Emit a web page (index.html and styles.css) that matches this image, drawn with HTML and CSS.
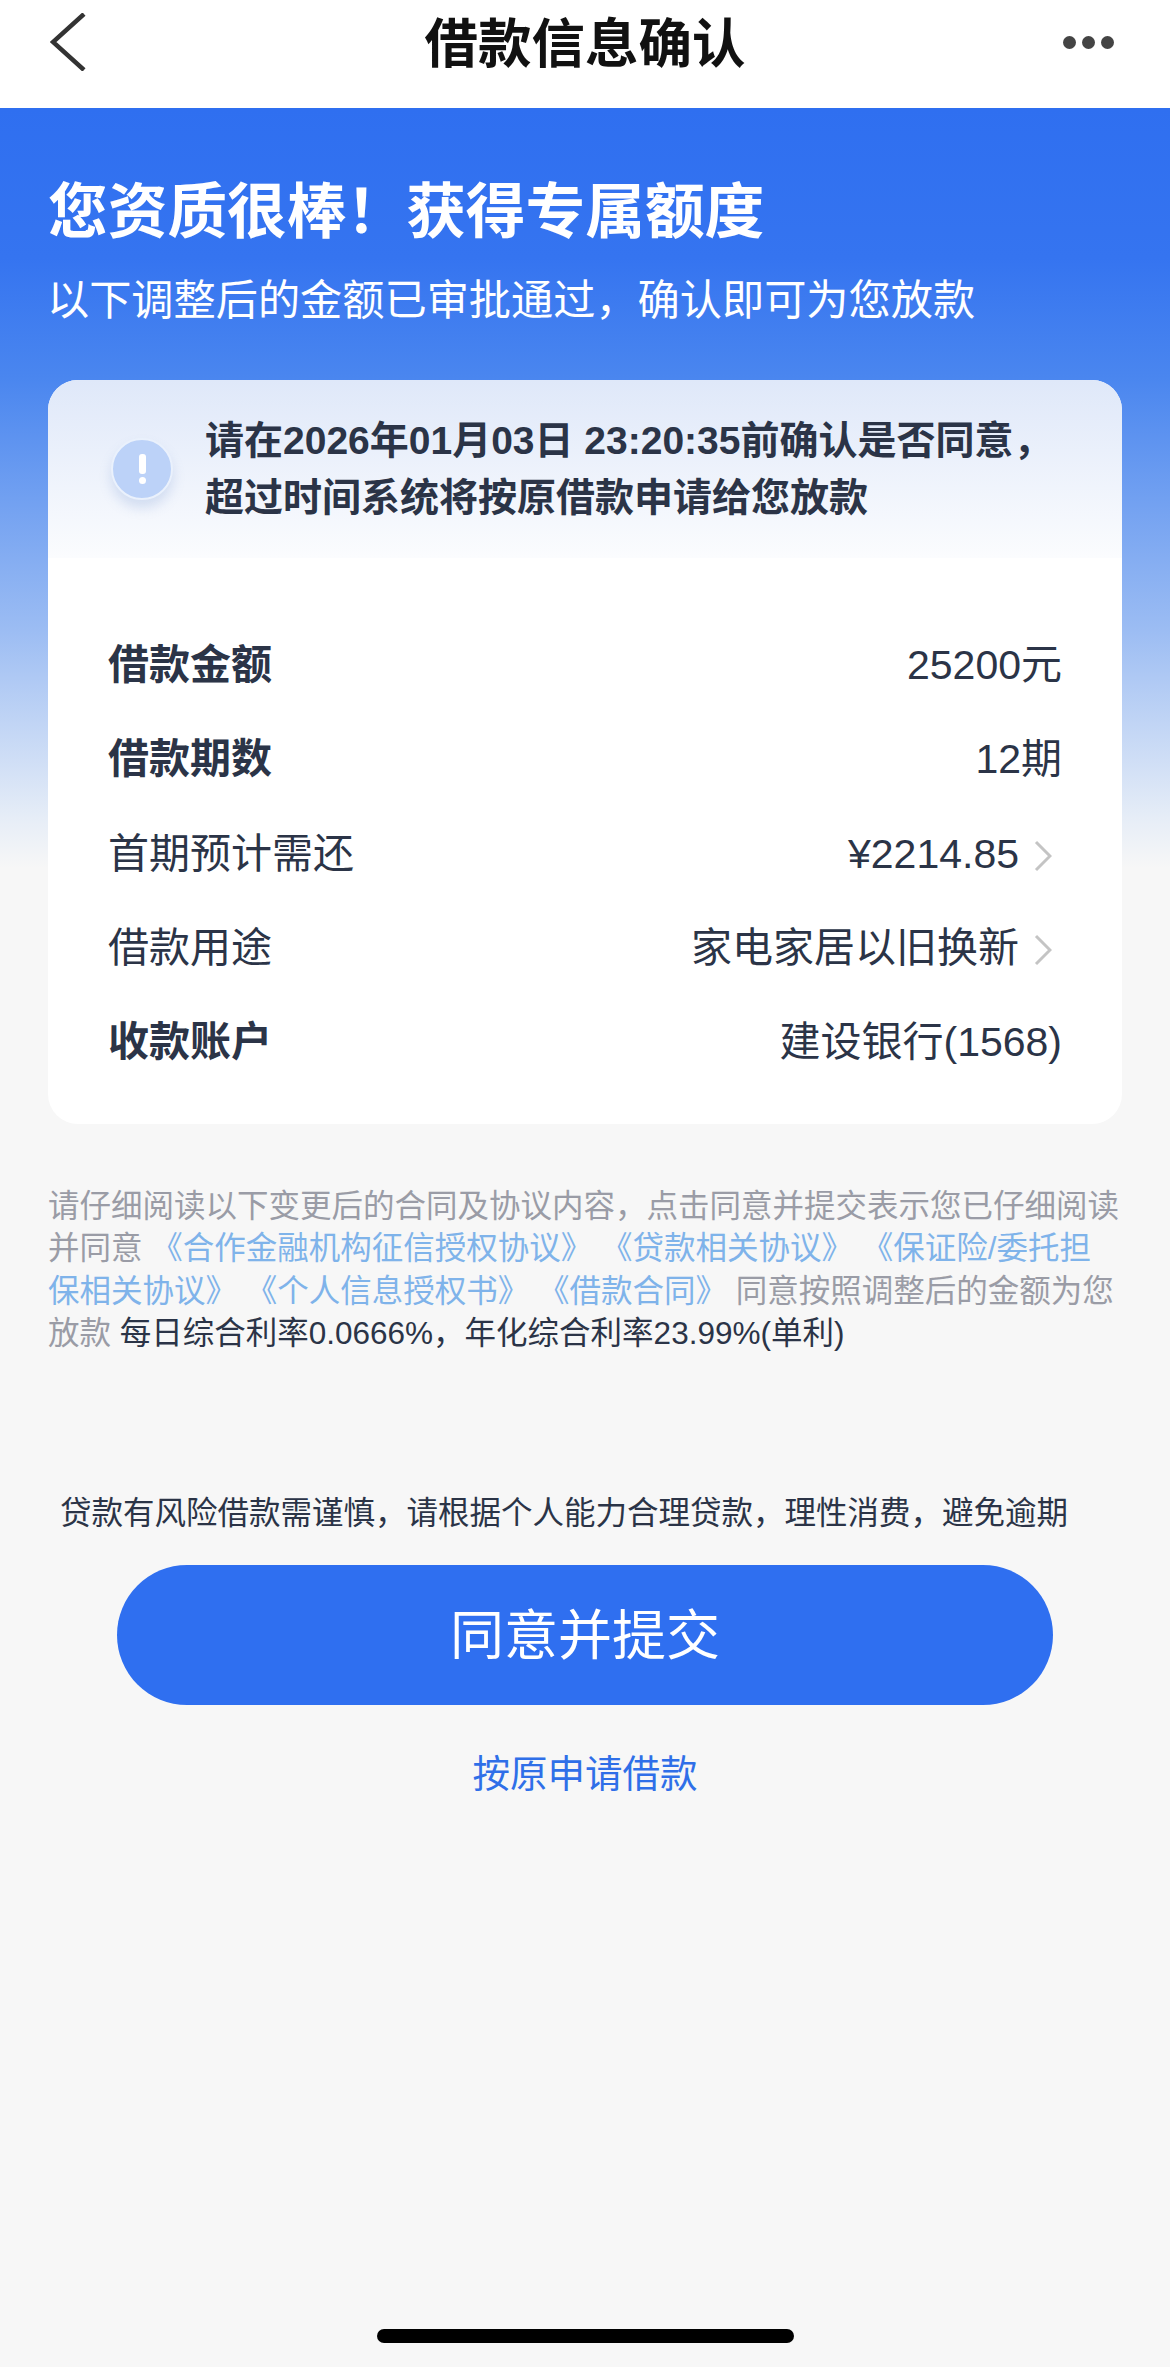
FILE: index.html
```html
<!doctype html>
<html lang="zh-CN">
<head>
    <meta charset="UTF-8">
    <title>借款信息确认</title>
    <link rel="stylesheet" href="styles.css">
</head>
<body>
<div class="page">
    <div class="nav">
        <svg class="nav-back" width="36" height="58" viewBox="0 0 36 58">
            <path d="M34 1 L3 29 L34 57" fill="none" stroke="#333" stroke-width="4.5"/>
        </svg>
        <div class="nav-title">借款信息确认</div>
        <div class="nav-more"><i></i><i></i><i></i></div>
    </div>

    <div class="main">
        <div class="head-title">您资质很棒！获得专属额度</div>
        <div class="head-sub">以下调整后的金额已审批通过，确认即可为您放款</div>

        <div class="card">
            <div class="notice">
                <div class="notice-icon"><i class="mark-line"></i><i class="mark-dot"></i></div>
                <div class="notice-text">请在2026年01月03日 23:20:35前确认是否同意，<br>超过时间系统将按原借款申请给您放款</div>
            </div>
            <div class="rows">
                <div class="row"><span class="row-name bold">借款金额</span><span class="row-val">25200元</span></div>
                <div class="row"><span class="row-name bold">借款期数</span><span class="row-val">12期</span></div>
                <div class="row">
                    <span class="row-name">首期预计需还</span>
                    <span class="row-val">¥2214.85<svg class="arrow" width="18" height="32" viewBox="0 0 18 32"><path d="M2 2 L16 16 L2 30" fill="none" stroke="#c4c4c4" stroke-width="3"/></svg></span>
                </div>
                <div class="row">
                    <span class="row-name">借款用途</span>
                    <span class="row-val">家电家居以旧换新<svg class="arrow" width="18" height="32" viewBox="0 0 18 32"><path d="M2 2 L16 16 L2 30" fill="none" stroke="#c4c4c4" stroke-width="3"/></svg></span>
                </div>
                <div class="row"><span class="row-name bold">收款账户</span><span class="row-val">建设银行(1568)</span></div>
            </div>
        </div>

        <div class="agree">请仔细阅读以下变更后的合同及协议内容，点击同意并提交表示您已仔细阅读并同意 <a>《合作金融机构征信授权协议》</a> <a>《贷款相关协议》</a> <a>《保证险/委托担保相关协议》</a> <a>《个人信息授权书》</a> <a>《借款合同》</a> 同意按照调整后的金额为您放款 <span class="rate">每日综合利率0.0666%，年化综合利率23.99%(单利)</span></div>

        <div class="risk">贷款有风险借款需谨慎，请根据个人能力合理贷款，理性消费，避免逾期</div>
        <div class="btn">同意并提交</div>
        <div class="link">按原申请借款</div>
    </div>

    <div class="home-bar"></div>
</div>
</body>
</html>
```

FILE: styles.css
```css
*{
    box-sizing: border-box;
}
body{
    margin: 0;
    background: #f7f7f7;
    font-family: "Liberation Sans", "Noto Sans CJK SC", sans-serif;
}
.page{
    position: relative;
    height: 2367px;
    overflow: hidden;
}

.nav{
    height: 108px;
    background: #fff;
    display: grid;
    grid-template-columns: 1fr auto 1fr;
    align-items: center;
    padding: 0 50px 24px 50px;
}
.nav-back{
    display: block;
}
.nav-title{
    font-size: 53.5px;
    line-height: 74px;
    font-weight: 700;
    color: #111;
    margin-top: 6px;
}
.nav-more{
    display: flex;
    justify-content: flex-end;
    gap: 6px;
    margin-right: 6px;
}
.nav-more i{
    width: 13px;
    height: 13px;
    border-radius: 50%;
    background: #444;
}

.main{
    height: 2259px;
    padding: 63px 48px 0;
    background: linear-gradient(#2f6ff0 0, #3574f0 150px, #4a86ef 270px, #9bbcf3 520px, #e6edf7 710px, #f7f7f7 760px);
}
.head-title{
    font-size: 59.7px;
    line-height: 84px;
    font-weight: 700;
    color: #fff;
}
.head-sub{
    margin-top: 16px;
    margin-left: -1px;
    font-size: 42.2px;
    line-height: 60px;
    color: #fff;
}

.card{
    margin-top: 49px;
    height: 744px;
    background: #fff;
    border-radius: 30px;
    overflow: hidden;
}
.notice{
    height: 178px;
    display: flex;
    align-items: center;
    padding-left: 63px;
    gap: 32px;
    background: linear-gradient(#dfe8f9, #fbfcfe);
}
.notice-icon{
    width: 62px;
    height: 62px;
    border-radius: 50%;
    background: #bcd2f8;
    border: 2px solid #eaf1fc;
    box-shadow: 0 8px 12px rgba(120, 150, 210, .25);
    display: flex;
    flex-direction: column;
    align-items: center;
    justify-content: center;
    gap: 3px;
}
.mark-line{
    width: 7px;
    height: 20px;
    border-radius: 3px;
    background: #fff;
}
.mark-dot{
    width: 7px;
    height: 7px;
    border-radius: 50%;
    background: #fff;
}
.notice-text{
    font-size: 39px;
    line-height: 57px;
    font-weight: 700;
    color: #2b3447;
}
.rows{
    padding: 60px 60px 0;
}
.row{
    height: 94.3px;
    display: flex;
    align-items: center;
    justify-content: space-between;
    font-size: 41px;
    line-height: 50px;
    color: #2b3447;
}
.bold{
    font-weight: 700;
}
.row-val{
    display: flex;
    align-items: center;
}
.arrow{
    margin: 4px 10px 0 15px;
}

.agree{
    margin-top: 61px;
    font-size: 31.5px;
    line-height: 42.3px;
    color: #9a9ca6;
}
.agree a{
    color: #7fb3ea;
}
.rate{
    color: #2b3447;
}

.risk{
    margin-top: 136px;
    padding-left: 12px;
    font-size: 31.5px;
    line-height: 46px;
    color: #2b3447;
}
.btn{
    margin: 29px 69px 0;
    height: 140px;
    border-radius: 70px;
    background: #2f6ff0;
    color: #fff;
    font-size: 54px;
    line-height: 142px;
    text-align: center;
}
.link{
    margin-top: 44px;
    font-size: 37.5px;
    line-height: 50px;
    color: #2f6fe8;
    text-align: center;
}

.home-bar{
    position: absolute;
    left: 377px;
    bottom: 24px;
    width: 417px;
    height: 14px;
    border-radius: 7px;
    background: #000;
}
```
